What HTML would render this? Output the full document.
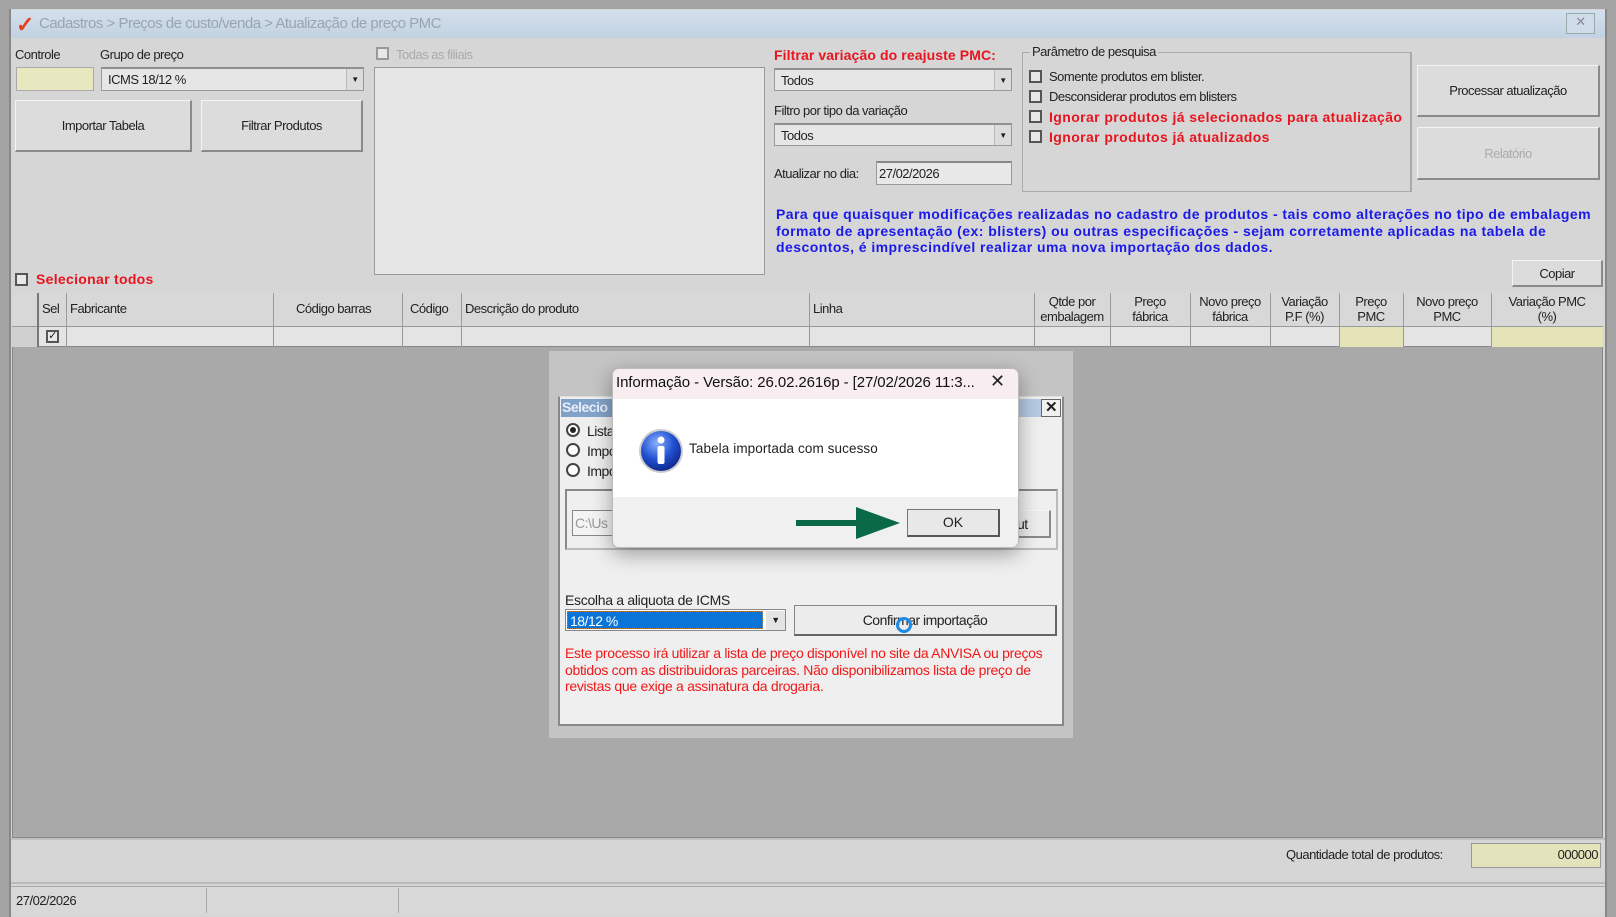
<!DOCTYPE html>
<html><head><meta charset="utf-8"><style>
*{box-sizing:border-box;margin:0;padding:0}
body{width:1616px;height:917px;background:#a4a4a4;position:relative;overflow:hidden;font-family:"Liberation Sans",sans-serif;font-size:13px;color:#222;letter-spacing:-0.5px}
.a{position:absolute;white-space:nowrap}
.btn{position:absolute;background:#dcdcdc;border:1px solid #f4f4f4;border-right:2px solid #8a8a8a;border-bottom:2px solid #8a8a8a;display:flex;align-items:center;justify-content:center}
.sel{position:absolute;background:#e6e6e6;border:1px solid #999;border-top:2px solid #8f8f8f;padding:3px 6px}
.sel .ar{position:absolute;right:0;top:0;bottom:0;width:17px;background:#dcdcdc;border-left:1px solid #bbb;font-size:8px;display:flex;align-items:center;justify-content:center}
.cb{position:absolute;width:13px;height:13px;border:2px solid #555;background:#e8e8e8}
.red{color:#e8141e;font-weight:bold}
.col{position:absolute;top:0;bottom:0;border-left:1px solid #9a9a9a}
</style></head><body>
<!-- window -->
<div class="a" style="left:9px;top:9px;width:1598px;height:908px;background:#d6d6d6;border-left:2px solid #888;border-right:2px solid #888"></div>
<div class="a" style="left:11px;top:10px;width:1594px;height:28px;background:linear-gradient(#d4e0ec,#c2d2e2)"></div>
<div class="a" style="left:16px;top:12px;color:#e8401c;font-size:22px;font-weight:bold">✓</div>
<div class="a" style="left:39px;top:15px;color:#9aa4b0;font-size:15px">Cadastros &gt; Preços de custo/venda &gt; Atualização de preço PMC</div>
<div class="a" style="left:1566px;top:13px;width:29px;height:21px;border:1px solid #9aa;background:#d0dcea;color:#889;text-align:center;font-size:13px">✕</div>

<div class="a" style="left:15px;top:47px">Controle</div>
<div class="a" style="left:16px;top:67px;width:78px;height:24px;background:#e8e8c0;border:1px solid #aaa"></div>
<div class="a" style="left:100px;top:47px">Grupo de preço</div>
<div class="sel" style="left:101px;top:67px;width:263px;height:24px">ICMS 18/12 %<div class="ar">▼</div></div>
<div class="btn" style="left:15px;top:100px;width:177px;height:52px">Importar Tabela</div>
<div class="btn" style="left:201px;top:100px;width:162px;height:52px">Filtrar Produtos</div>
<div class="cb" style="left:376px;top:47px;border-color:#999"></div>
<div class="a" style="left:396px;top:47px;color:#aaa">Todas as filiais</div>
<div class="a" style="left:374px;top:67px;width:391px;height:208px;background:#e6e6e6;border:1px solid #999"></div>

<div class="a red" style="left:774px;top:47px;font-size:14px;letter-spacing:0.1px">Filtrar variação do reajuste PMC:</div>
<div class="sel" style="left:774px;top:68px;width:238px;height:23px">Todos<div class="ar">▼</div></div>
<div class="a" style="left:774px;top:103px">Filtro por tipo da variação</div>
<div class="sel" style="left:774px;top:123px;width:238px;height:23px">Todos<div class="ar">▼</div></div>
<div class="a" style="left:774px;top:166px">Atualizar no dia:</div>
<div class="a" style="left:876px;top:161px;width:136px;height:24px;background:#e8e8e8;border:1px solid #999;border-top:2px solid #888;padding:3px 2px">27/02/2026</div>

<div class="a" style="left:1022px;top:52px;width:390px;height:140px;border:1px solid #aaa;border-right:2px solid #aaa"></div>
<div class="a" style="left:1030px;top:44px;background:#d6d6d6;padding:0 2px">Parâmetro de pesquisa</div>
<div class="cb" style="left:1029px;top:70px"></div><div class="a" style="left:1049px;top:69px">Somente produtos em blister.</div>
<div class="cb" style="left:1029px;top:90px"></div><div class="a" style="left:1049px;top:89px">Desconsiderar produtos em blisters</div>
<div class="cb" style="left:1029px;top:110px"></div><div class="a red" style="left:1049px;top:109px;font-size:14px;letter-spacing:0.4px">Ignorar produtos já selecionados para atualização</div>
<div class="cb" style="left:1029px;top:130px"></div><div class="a red" style="left:1049px;top:129px;font-size:14px;letter-spacing:0.4px">Ignorar produtos já atualizados</div>

<div class="btn" style="left:1417px;top:65px;width:183px;height:52px">Processar atualização</div>
<div class="btn" style="left:1417px;top:127px;width:183px;height:53px;color:#aaa">Relatório</div>

<div class="a" style="left:776px;top:206px;color:#1a1ae8;font-weight:bold;font-size:14px;line-height:16.5px;letter-spacing:0.45px">Para que quaisquer modificações realizadas no cadastro de produtos - tais como alterações no tipo de embalagem<br>formato de apresentação (ex: blisters) ou outras especificações - sejam corretamente aplicadas na tabela de<br>descontos, é imprescindível realizar uma nova importação dos dados.</div>
<div class="btn" style="left:1512px;top:260px;width:91px;height:27px">Copiar</div>

<div class="cb" style="left:15px;top:273px"></div>
<div class="a red" style="left:36px;top:271px;font-size:14px;letter-spacing:0.3px">Selecionar todos</div>

<!-- grid -->
<div class="a" style="left:12px;top:293px;width:1591px;height:545px;background:#a9a9a9;border:1px solid #888"></div>
<div class="a" style="left:12px;top:293px;width:1591px;height:34px;background:#d8d8d8;border-bottom:1px solid #999"></div>
<div class="a" style="left:12px;top:327px;width:1591px;height:20px;background:#e4e4e4;border-bottom:1px solid #888"></div>
<div class="a" style="left:12px;top:327px;width:25px;height:20px;background:#d0d0d0"></div>
<div class="a" style="left:1339px;top:327px;width:64px;height:20px;background:#e4e4b8"></div>
<div class="a" style="left:1491px;top:327px;width:112px;height:20px;background:#e4e4b8"></div>
<div class="a" style="left:12px;top:293px;width:1591px;height:54px">
<div class="col" style="left:25px;border-left:2px solid #777"></div><div class="col" style="left:54px"></div><div class="col" style="left:261px"></div><div class="col" style="left:390px"></div><div class="col" style="left:449px"></div><div class="col" style="left:797px"></div><div class="col" style="left:1022px"></div><div class="col" style="left:1098px"></div><div class="col" style="left:1178px"></div><div class="col" style="left:1258px"></div><div class="col" style="left:1327px"></div><div class="col" style="left:1391px"></div><div class="col" style="left:1479px"></div>
</div>
<div class="cb" style="left:46px;top:330px;font-size:11px;line-height:9px;text-align:center">✓</div>
<div class="a" style="left:42px;top:301px">Sel</div>
<div class="a" style="left:70px;top:301px">Fabricante</div>
<div class="a" style="left:296px;top:301px">Código barras</div>
<div class="a" style="left:410px;top:301px">Código</div>
<div class="a" style="left:465px;top:301px">Descrição do produto</div>
<div class="a" style="left:813px;top:301px">Linha</div>
<div class="a" style="left:1034px;top:294px;width:76px;text-align:center;white-space:normal;line-height:15px">Qtde por embalagem</div>
<div class="a" style="left:1110px;top:294px;width:80px;text-align:center;line-height:15px">Preço<br>fábrica</div>
<div class="a" style="left:1190px;top:294px;width:80px;text-align:center;line-height:15px">Novo preço<br>fábrica</div>
<div class="a" style="left:1270px;top:294px;width:69px;text-align:center;line-height:15px">Variação<br>P.F (%)</div>
<div class="a" style="left:1339px;top:294px;width:64px;text-align:center;line-height:15px">Preço<br>PMC</div>
<div class="a" style="left:1403px;top:294px;width:88px;text-align:center;line-height:15px">Novo preço<br>PMC</div>
<div class="a" style="left:1491px;top:294px;width:112px;text-align:center;line-height:15px">Variação PMC<br>(%)</div>

<!-- bottom -->
<div class="a" style="left:11px;top:838px;width:1594px;height:46px;background:#d6d6d6;border-top:2px solid #c0c0c0;border-bottom:2px solid #bbb"></div>
<div class="a" style="left:1286px;top:847px">Quantidade total de produtos:</div>
<div class="a" style="left:1471px;top:843px;width:130px;height:25px;background:#e4e4bc;border:1px solid #999;text-align:right;padding:3px 2px">000000</div>
<div class="a" style="left:11px;top:886px;width:1594px;height:28px;background:#d8d8d8;border-top:1px solid #aaa"></div>
<div class="a" style="left:206px;top:888px;height:25px;border-left:1px solid #aaa"></div>
<div class="a" style="left:398px;top:888px;height:25px;border-left:1px solid #aaa"></div>
<div class="a" style="left:16px;top:893px">27/02/2026</div>

<!-- background dialog -->
<div class="a" style="left:549px;top:351px;width:524px;height:387px;background:#c4c4c4"></div>
<div class="a" style="left:558px;top:396px;width:506px;height:330px;background:#efefef;border:2px solid #888;border-top:1px solid #ddd"></div>
<div class="a" style="left:561px;top:399px;width:500px;height:18px;background:linear-gradient(90deg,#7fa0c8,#b8cce4)"></div>
<div class="a" style="left:562px;top:399px;color:#e8eef8;font-weight:bold;font-size:14px">Selecio</div>
<div class="a" style="left:1041px;top:399px;width:20px;height:18px;background:#f0f0f0;border:1px solid #666;text-align:center;font-weight:bold;font-size:15px;line-height:16px">✕</div>
<div class="a" style="left:566px;top:423px;width:14px;height:14px;border:2px solid #444;border-radius:50%;background:#fff"><div style="margin:2px;width:6px;height:6px;border-radius:50%;background:#222"></div></div>
<div class="a" style="left:566px;top:443px;width:14px;height:14px;border:2px solid #444;border-radius:50%;background:#fff"></div>
<div class="a" style="left:566px;top:463px;width:14px;height:14px;border:2px solid #444;border-radius:50%;background:#fff"></div>
<div class="a" style="left:587px;top:423px;font-size:14px">Lista</div>
<div class="a" style="left:587px;top:443px;font-size:14px">Impo</div>
<div class="a" style="left:587px;top:463px;font-size:14px">Impo</div>
<div class="a" style="left:565px;top:489px;width:493px;height:61px;border:2px solid #888;border-right-color:#bbb;border-bottom-color:#bbb"></div>
<div class="a" style="left:572px;top:510px;width:60px;height:26px;background:#f4f4f4;border:1px solid #888;color:#999;padding:4px 2px;font-size:14px">C:\Us</div>
<div class="btn" style="left:990px;top:510px;width:61px;height:28px;background:#ececec;justify-content:flex-start;padding-left:26px;font-size:14px">ut</div>
<div class="a" style="left:565px;top:592px;font-size:14px;letter-spacing:-0.3px">Escolha a aliquota de ICMS</div>
<div class="a" style="left:565px;top:609px;width:221px;height:22px;border:1px solid #888;background:#fff"></div>
<div class="a" style="left:567px;top:611px;width:196px;height:18px;background:#0a74d8;color:#fff;padding:1px 2px;font-size:14px;border:1px dotted #c08040">18/12 %</div>
<div class="a" style="left:766px;top:611px;width:19px;height:19px;background:#e4e4e4;font-size:9px;text-align:center;line-height:19px">▼</div>
<div class="btn" style="left:794px;top:605px;width:263px;height:31px;background:#ececec;border:1px solid #888;border-right:2px solid #666;border-bottom:2px solid #666;font-size:14px">Confirmar importação</div>
<div class="a" style="left:896px;top:617px;width:16px;height:16px;border:3px solid #1e8ae8;border-radius:50%"></div>
<div class="a" style="left:565px;top:645px;color:#f01818;font-size:14px;line-height:16.5px;letter-spacing:-0.3px">Este processo irá utilizar a lista de preço disponível no site da ANVISA ou preços<br>obtidos com as distribuidoras parceiras. Não disponibilizamos lista de preço de<br>revistas que exige a assinatura da drogaria.</div>

<!-- message box -->
<div class="a" style="left:612px;top:368px;width:407px;height:180px;background:#f0f0f0;border:1px solid #bbb;border-radius:7px;box-shadow:0 6px 20px rgba(0,0,0,.35);overflow:hidden">
<div style="position:absolute;left:0;top:0;width:100%;height:30px;background:#f8eef2"></div>
<div style="position:absolute;left:0;top:30px;width:100%;height:98px;background:#fff"></div>
</div>
<div class="a" style="left:616px;top:374px;font-size:15px;letter-spacing:-0.1px;color:#111">Informação - Versão: 26.02.2616p - [27/02/2026 11:3...</div>
<div class="a" style="left:990px;top:371px;font-size:18px;color:#222">✕</div>
<svg class="a" style="left:637px;top:427px" width="48" height="48" viewBox="0 0 48 48"><defs><radialGradient id="g" cx="40%" cy="30%" r="70%"><stop offset="0" stop-color="#8ab0ff"/><stop offset=".6" stop-color="#2050d0"/><stop offset="1" stop-color="#102a90"/></radialGradient></defs><circle cx="24" cy="24" r="22" fill="#ccc"/><circle cx="24" cy="24" r="20" fill="url(#g)"/><circle cx="24" cy="13" r="3.5" fill="#fff"/><rect x="20.5" y="19" width="7" height="18" rx="2" fill="#fff"/></svg>
<div class="a" style="left:689px;top:441px;font-size:13.5px;letter-spacing:0.1px">Tabela importada com sucesso</div>
<svg class="a" style="left:794px;top:505px" width="112" height="36"><polygon points="2,15 62,15 62,2 106,18 62,34 62,21 2,21" fill="#0a6a48"/></svg>
<div class="a" style="left:907px;top:509px;width:93px;height:28px;background:#e8e8e8;border:1px solid #777;border-right:2px solid #555;border-bottom:2px solid #555;text-align:center;line-height:25px;font-size:14px;letter-spacing:0">OK</div>
</body></html>
